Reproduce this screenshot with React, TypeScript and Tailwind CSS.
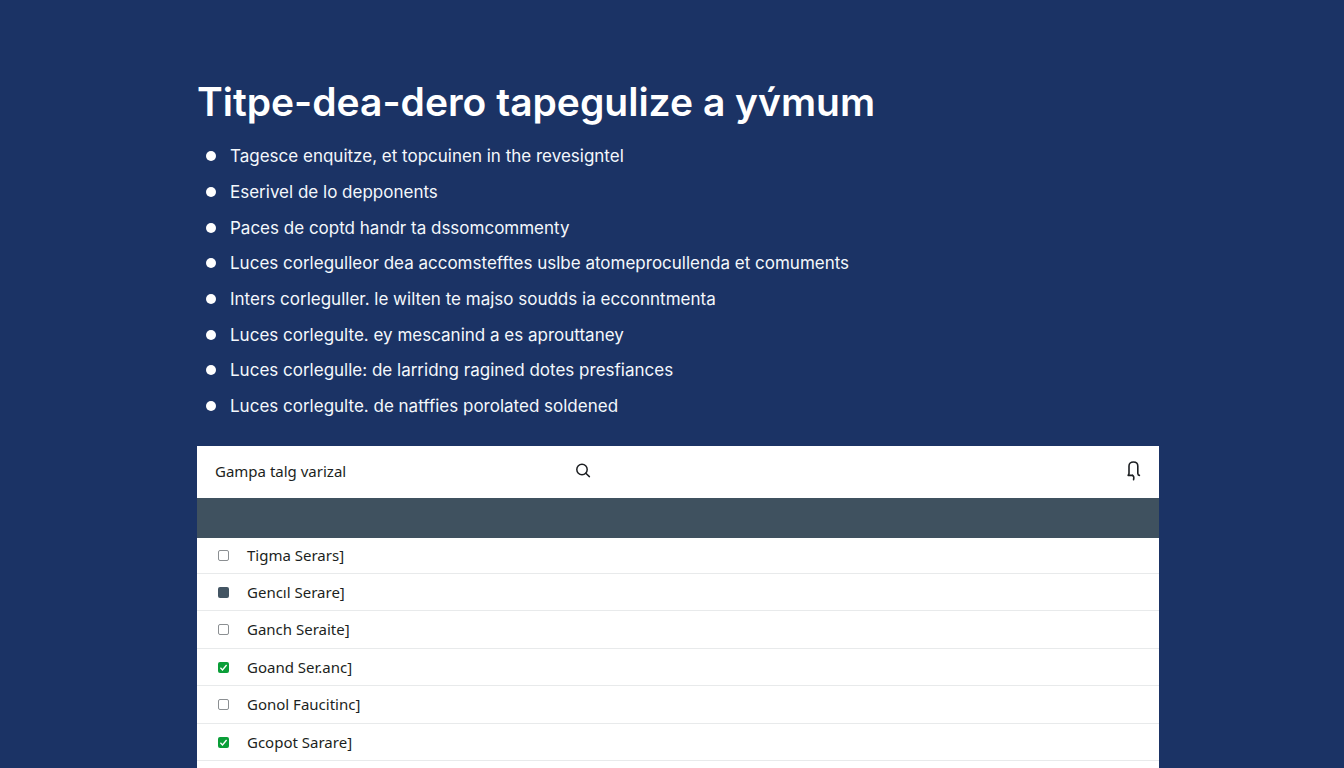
type RowState = "off" | "partial" | "on";

type RowProps = {
  id: string;
  label: string;
  state: RowState;
};

const points = [
  "Tagesce enquitze, et topcuinen in the revesigntel",
  "Eserivel de lo depponents",
  "Paces de coptd handr ta dssomcommenty",
  "Luces corlegulleor dea accomstefftes uslbe atomeprocullenda et comuments",
  "Inters corleguller. le wilten te majso soudds ia ecconntmenta",
  "Luces corlegulte. ey mescanind a es aprouttaney",
  "Luces corlegulle: de larridng ragined dotes presfiances",
  "Luces corlegulte. de natffies porolated soldened",
];

const rows: RowProps[] = [
  { id: "tigma", label: "Tigma Serars]", state: "off" },
  { id: "gencil", label: "Gencıl Serare]", state: "partial" },
  { id: "ganch", label: "Ganch Seraite]", state: "off" },
  { id: "goand", label: "Goand Ser.anc]", state: "on" },
  { id: "gonol", label: "Gonol Faucitinc]", state: "off" },
  { id: "gcopot", label: "Gcopot Sarare]", state: "on" },
];

const boxStyles: Record<RowState, string> = {
  off: "border border-[#8b8f92] bg-white",
  partial: "bg-[#435563]",
  on: "bg-[#0a9e38]",
};

const SearchIcon = () => (
  <svg viewBox="0 0 16 16" className="w-4 h-4" fill="none" stroke="currentColor" strokeWidth="1.5">
    <circle cx="7" cy="6.5" r="5.2" />
    <path d="M10.8 10.3L14.4 13.6" strokeLinecap="round" />
  </svg>
);

const BellIcon = () => (
  <svg
    viewBox="0 0 16 20"
    className="w-4 h-5"
    fill="none"
    stroke="currentColor"
    strokeWidth="1.6"
    strokeLinecap="round"
    strokeLinejoin="round"
  >
    <path d="M7.6 14.4H3.2L4 12.6V5C4 2.4 5.8 1 8.4 1S12.8 2.4 12.8 5V12.4Q13 14.2 14.4 14.4" />
    <path d="M7.6 14.4Q9.4 15 8.6 18.6" />
  </svg>
);

const Row = ({ id, label, state }: RowProps) => (
  <li className="flex items-center h-[38px] pl-[21px] border-b border-[#e8eaeb] even:h-[37px] first:h-9">
    <span className="grid w-[11px] h-[11px]">
      <input
        id={id}
        type="checkbox"
        defaultChecked={state !== "off"}
        className={`appearance-none col-start-1 row-start-1 w-[11px] h-[11px] rounded-xs ${boxStyles[state]}`}
      />
      {state === "on" && (
        <svg
          viewBox="0 0 11 11"
          className="col-start-1 row-start-1 w-[11px] h-[11px] pointer-events-none"
          fill="none"
          stroke="white"
          strokeWidth="1.3"
        >
          <path d="M2.4 5.8L4.5 8L8.6 3" />
        </svg>
      )}
    </span>
    <label htmlFor={id} className="pb-px pl-[18px] text-[15px] leading-5">
      {label}
    </label>
  </li>
);

export default function App() {
  return (
    <main className="flex flex-col min-h-screen pt-20 pl-[197px] pr-[185px] bg-[#1b3365] font-['Inter',sans-serif]">
      <h1 className="text-[39px] leading-[44px] font-semibold text-white">
        Titpe-dea-dero tapegulize a yv́mum
      </h1>
      <ul className="pt-[14px] pl-[9px] text-[17px] text-[#f4f8fc]">
        {points.map((point) => (
          <li key={point} className="flex items-center h-9 gap-[14px] nth-[3n]:h-[35px]">
            <span className="w-[10px] h-[10px] rounded-full bg-white" />
            <span className="pt-0.5">{point}</span>
          </li>
        ))}
      </ul>
      <section className="flex flex-col flex-1 mt-[22px] bg-white text-[#1c1f22] font-['Noto_Sans',sans-serif]">
        <div className="flex items-center justify-between h-[52px] px-[18px] pb-0.5">
          <div className="flex items-center">
            <input
              type="text"
              aria-label="Gampa talg varizal"
              defaultValue="Gampa talg varizal"
              className="w-[360px] text-[15px] outline-none"
            />
            <button type="button" aria-label="Search">
              <SearchIcon />
            </button>
          </div>
          <button type="button" aria-label="Notifications">
            <BellIcon />
          </button>
        </div>
        <div className="h-10 bg-[#3f515f]" />
        <ul>
          {rows.map((row) => (
            <Row key={row.id} {...row} />
          ))}
        </ul>
      </section>
    </main>
  );
}
